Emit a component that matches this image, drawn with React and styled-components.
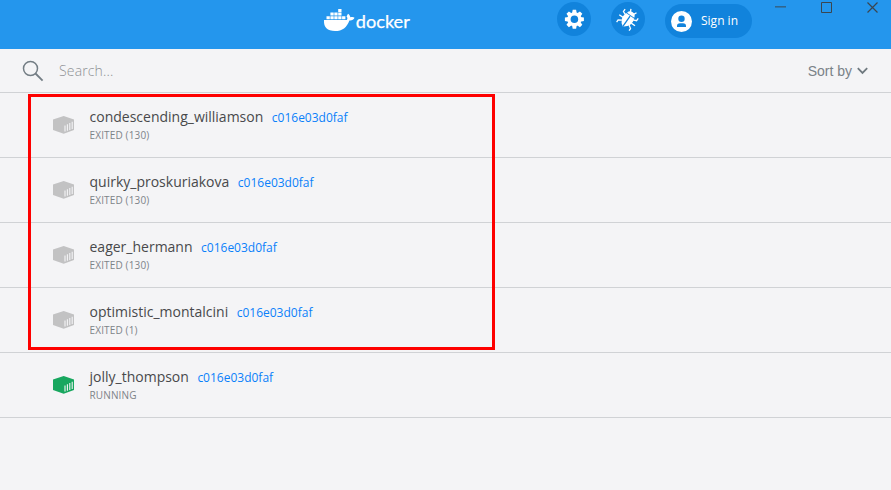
import React from "react";
import styled, { createGlobalStyle } from "styled-components";

const GlobalStyle = createGlobalStyle`
  * { box-sizing: border-box; }
  body { margin: 0; background: #f4f4f6; font-family: "Open Sans", sans-serif; }
`;

const Window = styled.div`
  position: relative;
  width: 891px;
  height: 490px;
  overflow: hidden;
  background: #f4f4f6;
`;

const Header = styled.header`
  display: flex;
  align-items: flex-start;
  height: 49px;
  background: #2496ed;
`;

const Logo = styled.svg`
  display: block;
  width: 90px;
  height: 26px;
  margin: 8px 0 0 322px;
  font: 400 18px Lato, sans-serif;
`;

const Actions = styled.div`
  display: flex;
  gap: 20px;
  margin: 2px 0 0 145px;
`;

const RoundButton = styled.button`
  display: block;
  width: 34px;
  height: 34px;
  padding: 0;
  border: 0;
  border-radius: 50%;
  background: #1183dc;
  svg { display: block; }
`;

const SignIn = styled.button`
  display: flex;
  align-items: center;
  gap: 9px;
  width: 87px;
  height: 34px;
  margin-top: 2px;
  padding: 0 0 0 6px;
  border: 0;
  border-radius: 17px;
  background: #1183dc;
  color: #fff;
  font: 500 12px/34px "Open Sans", sans-serif;
  white-space: nowrap;
  svg { flex: none; }
`;

const WindowControls = styled.svg`
  display: block;
  margin-left: 22px;
`;

const SearchBar = styled.div`
  display: flex;
  align-items: center;
  height: 44px;
  padding: 0 23px 0 22px;
  border-bottom: 1px solid #d0d2d5;
`;

const SearchText = styled.span`
  flex: 1;
  margin-left: 15px;
  font-size: 14px;
  line-height: 20px;
  font-weight: 300;
  letter-spacing: 0.15px;
  color: #8f9295;
`;

const Sort = styled.div`
  display: flex;
  align-items: center;
  gap: 5px;
  font: 14px/20px "Liberation Sans", sans-serif;
  color: #7a8288;
`;

const Row = styled.div`
  display: flex;
  height: 65px;
  padding-left: 53px;
  border-bottom: 1px solid #d0d2d5;
`;

const Cube = styled.svg`
  display: block;
  margin: 22px 14.5px 0 0;
  color: ${(p) => (p.$running ? "#18a75f" : "#c2c2c3")};
`;

const Info = styled.div`
  padding-top: 14px;
`;

const Title = styled.div`
  display: flex;
  align-items: baseline;
  gap: 8.5px;
  height: 20px;
  line-height: 20px;
`;

const Name = styled.span`
  font-size: 14px;
  color: #48494b;
`;

const ImageId = styled.a`
  font-size: 12px;
  color: #0a80fa;
`;

const Status = styled.div`
  margin-top: 1px;
  font-size: 10px;
  line-height: 15px;
  letter-spacing: 0.15px;
  color: #7d8388;
`;

const Highlight = styled.div`
  position: absolute;
  left: 28px;
  top: 94px;
  width: 467px;
  height: 256px;
  border: 3px solid #fe0000;
  pointer-events: none;
`;

const containers = [
  { name: "condescending_williamson", status: "EXITED (130)" },
  { name: "quirky_proskuriakova", status: "EXITED (130)" },
  { name: "eager_hermann", status: "EXITED (130)" },
  { name: "optimistic_montalcini", status: "EXITED (1)" },
  { name: "jolly_thompson", status: "RUNNING", running: true },
];

function DockerLogo() {
  return (
    <Logo viewBox="0 0 90 26" fill="#fff">
      <path d="M2 12H24.7C25.7 11.3 25.6 9.5 24.5 8.5L26 5.8C27.6 6.8 28.2 8.2 28.4 9.3C30 8.8 31.6 8.9 32.5 9.8C31.6 11.9 29.8 12.6 27.4 12.4C24.8 19.4 20.5 23 13 23C5.4 23 1.6 19.5 2 12Z" />
      <path d="M4.5 8.2h3.3v3H4.5zM8.4 8.2h3.3v3H8.4zM12.3 8.2h3.3v3h-3.3zM16.2 8.2h3.3v3h-3.3zM20.1 8.2h3.3v3h-3.3zM8.4 4.6h3.3v3H8.4zM12.3 4.6h3.3v3h-3.3zM16.2 4.6h3.3v3h-3.3zM16.2 1h3.3v3h-3.3z" />
      <text x="33.8" y="20" textLength="54" lengthAdjust="spacingAndGlyphs" stroke="#fff" strokeWidth=".25" strokeLinejoin="round">docker</text>
    </Logo>
  );
}

function GearIcon() {
  return (
    <svg width="34" height="34" viewBox="-17 -17 34 34" fill="#fff">
      <g transform="translate(.4 .3)">
        {[0, 45, 90, 135].map((a) => (
          <path key={a} d="M-1.7 -9.5H1.7L2.4 -5.8H-2.4ZM-1.7 9.5H1.7L2.4 5.8H-2.4Z" transform={`rotate(${a})`} />
        ))}
        <circle r="5.4" fill="none" stroke="#fff" strokeWidth="3.2" />
      </g>
    </svg>
  );
}

function BugIcon() {
  return (
    <svg width="34" height="34" viewBox="-17 -17 34 34">
      <g transform="rotate(35)">
        <path d="M-5 -3.8H5Q7.6 4.5 0 9.2Q-7.6 4.5 -5 -3.8Z" fill="#fff" />
        <path d="M-4.4 -4.6Q-3.6 -8.2 0 -8.2Q3.6 -8.2 4.4 -4.6Z" fill="#fff" />
        <path d="M0 -3.6V9.2" stroke="#1183dc" strokeWidth="1.3" />
        <path d="M-4.5 -2L-8 -3.5V-6.4M4.5 -2L8 -3.5V-6.4M-5 1.5H-9.6M5 1.5H9.6M-4.4 4.4L-7.6 6.4V9M4.4 4.4L7.6 6.4V9M-2 -7L-3.4 -10M2 -7L3.4 -10" fill="none" stroke="#fff" strokeWidth="1.3" />
      </g>
    </svg>
  );
}

function PersonIcon() {
  return (
    <svg width="21" height="21" viewBox="0 0 21 21">
      <circle cx="10.5" cy="10.5" r="10.5" fill="#fff" />
      <circle cx="10.5" cy="7.8" r="3.2" fill="#1183dc" />
      <path d="M6 16V15Q6 12.2 9 12.2H12Q15 12.2 15 15V16Z" fill="#1183dc" />
    </svg>
  );
}

function ContainerIcon({ running }) {
  return (
    <Cube $running={running} width="22" height="20" viewBox="0 0 22 20">
      <path d="M10.7 1L21 4.6V15L10.7 18.8L0 15V4.6Z" fill="currentColor" />
      <path d="M12 10.6V16.4M14.4 9.3V15.8M16.8 8V15M19.2 6.8V14" stroke="#f4f4f6" strokeWidth="1.1" />
    </Cube>
  );
}

export default function App() {
  return (
    <Window>
      <GlobalStyle />
      <Header>
        <DockerLogo />
        <Actions>
          <RoundButton aria-label="Settings"><GearIcon /></RoundButton>
          <RoundButton aria-label="Troubleshoot"><BugIcon /></RoundButton>
          <SignIn><PersonIcon />Sign in</SignIn>
        </Actions>
        <WindowControls width="110" height="20" viewBox="0 0 110 20" fill="none" stroke="#3a4650" strokeWidth="1">
          <path d="M1 6.8H12" strokeOpacity=".65" strokeWidth="1.5" />
          <path d="M47.5 2.5H57.5V12.5H47.5Z" />
          <path d="M93.5 2.5L103.5 12.5M103.5 2.5L93.5 12.5" strokeWidth="1.2" />
        </WindowControls>
      </Header>
      <SearchBar>
        <svg width="22" height="22" viewBox="0 0 22 22" fill="none" stroke="#737d84" strokeWidth="1.5">
          <circle cx="8.5" cy="8.5" r="7" />
          <path d="M13.5 13.5L20.6 20.6" strokeWidth="1.8" />
        </svg>
        <SearchText>Search...</SearchText>
        <Sort>
          Sort by
          <svg width="11" height="8" viewBox="0 0 11 8" fill="none" stroke="#6f797f" strokeWidth="1.8">
            <path d="M.8 1.2L5.5 5.9L10.2 1.2" />
          </svg>
        </Sort>
      </SearchBar>
      {containers.map((c) => (
        <Row key={c.name}>
          <ContainerIcon running={c.running} />
          <Info>
            <Title><Name>{c.name}</Name><ImageId>c016e03d0faf</ImageId></Title>
            <Status>{c.status}</Status>
          </Info>
        </Row>
      ))}
      <Highlight />
    </Window>
  );
}
